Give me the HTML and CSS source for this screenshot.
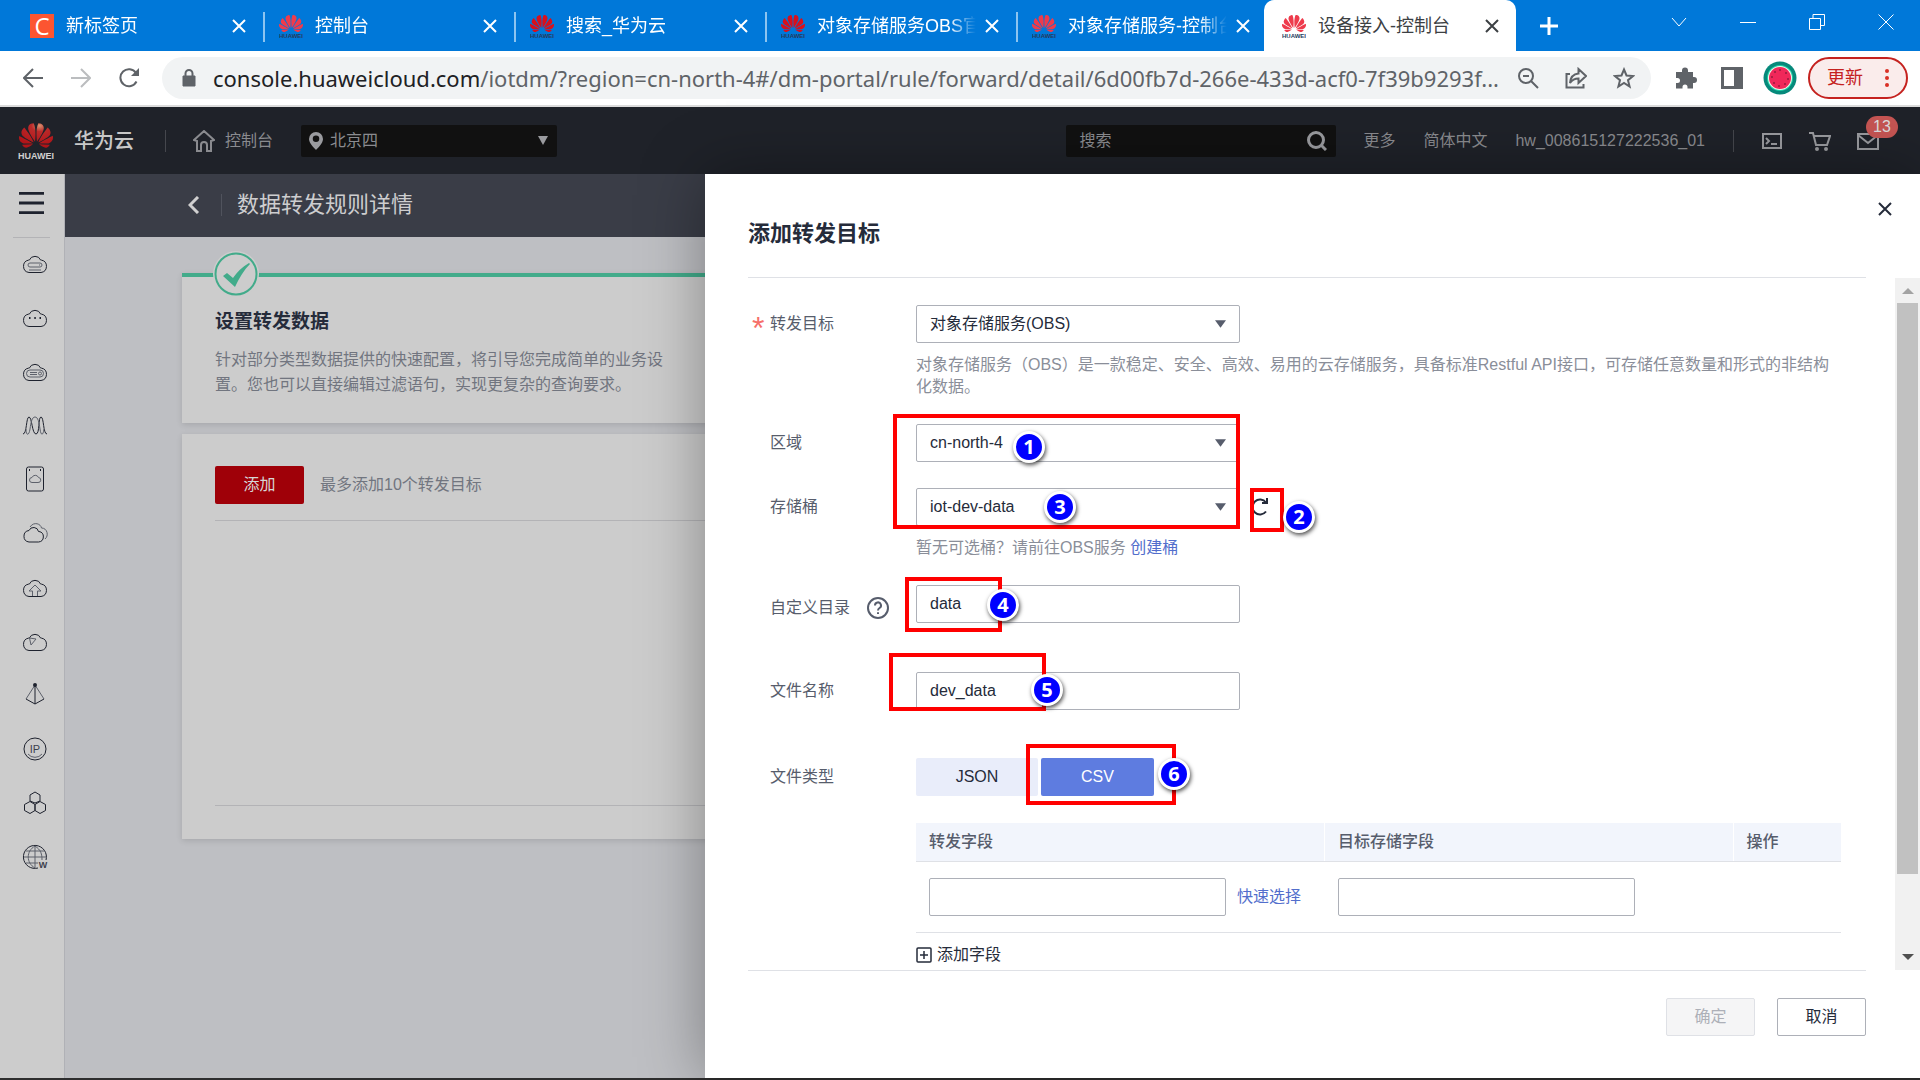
FILE: index.html
```html
<!DOCTYPE html>
<html lang="zh-CN">
<head>
  <meta charset="UTF-8">
  <meta name="viewport" content="width=device-width, initial-scale=1.0">
  <title>设备接入-控制台</title>
  <link rel="stylesheet" href="styles.css">
</head>
<body>
  <!-- shared icon shapes -->
  <svg class="sprite" aria-hidden="true">
    <defs>
      <radialGradient id="petalRed" cx="0.6" cy="0.1" r="0.8">
        <stop offset="0" stop-color="#d9926f"/>
        <stop offset="0.3" stop-color="#bb2a2a"/>
        <stop offset="1" stop-color="#b01418"/>
      </radialGradient>
      <symbol id="petals" viewBox="0 2 24 20" preserveAspectRatio="none">
        <path d="M3.67 6.14S1.82 7.91 1.72 9.78v.35c.08 1.51 1.22 2.4 1.22 2.4 1.83 1.79 6.26 4.04 7.3 4.55 0 0 .06.03.1-.01l.02-.04v-.04C7.52 10.8 3.67 6.14 3.67 6.14zM9.65 18.6c-.02-.08-.1-.08-.1-.08l-7.38.26c.8 1.43 2.15 2.53 3.56 2.2.96-.25 3.16-1.78 3.88-2.3.06-.05.04-.09.04-.09zm.08-.78C6.49 15.63.21 12.28.21 12.28c-.15.46-.2.9-.21 1.3v.07c0 1.07.4 1.82.4 1.82.8 1.69 2.34 2.2 2.34 2.2.7.3 1.4.31 1.4.31.12.02 4.4 0 5.54 0 .05 0 .08-.05.08-.05v-.06c0-.03-.03-.05-.03-.05zM9.06 3.19a3.42 3.42 0 00-2.57 3.15v.41c.03.6.16 1.05.16 1.05.66 2.9 3.86 7.65 4.55 8.65.05.05.1.03.1.03a.1.1 0 00.06-.1c1.06-10.6-1.11-13.42-1.11-13.42-.32.02-1.19.23-1.19.23zm8.3 2.27s-.49-1.8-2.44-2.28c0 0-.57-.14-1.17-.22 0 0-2.18 2.81-1.12 13.43.01.07.06.08.06.08.07.03.1-.03.1-.03.72-1.03 3.9-5.76 4.55-8.64 0 0 .36-1.4.02-2.34zm-2.92 13.07s-.07 0-.09.05c0 0-.01.07.03.1.7.51 2.85 2 3.88 2.3 0 0 .16.05.43.06h.14c.69-.02 1.9-.37 3-2.26l-7.4-.25zm7.83-8.41c.14-2.06-1.94-3.97-1.94-3.98 0 0-3.85 4.66-6.67 10.8 0 0-.03.08.02.13l.04.01h.06c1.06-.53 5.46-2.77 7.28-4.54 0 0 1.15-.93 1.21-2.42zm1.52 2.14s-6.28 3.37-9.52 5.55c0 0-.05.04-.03.11 0 0 .03.06.07.06 1.16 0 5.56 0 5.67-.02 0 0 .57-.02 1.27-.29 0 0 1.56-.5 2.37-2.27 0 0 .73-1.45.17-3.14z"/>
      </symbol>
      <symbol id="favicon" viewBox="0 0 24 24">
        <use href="#petals" width="24" height="19"/>
        <text x="12" y="24" text-anchor="middle" class="favicon-text">HUAWEI</text>
      </symbol>
      <symbol id="cross" viewBox="0 0 14 14">
        <path d="M1 1l12 12M13 1L1 13" fill="none" stroke="currentColor"/>
      </symbol>
      <symbol id="cloud" viewBox="0 0 28 22">
        <path d="M8 20.500H20a6.300 6.300 0 0 0 .5-12.400h-.8a6.200 6.200 0 0 0-11.400 0h-.8A6.300 6.300 0 0 0 8 20.500z"/>
      </symbol>
    </defs>
  </svg>

  <header class="browser">
    <nav class="tab-bar">
      <div class="tab">
        <span class="favicon-c">C</span>
        <span class="tab-title">新标签页</span>
        <button class="tab-close" aria-label="关闭"><svg><use href="#cross"/></svg></button>
      </div>
      <div class="tab">
        <svg class="favicon light"><use href="#favicon"/></svg>
        <span class="tab-title">控制台</span>
        <button class="tab-close" aria-label="关闭"><svg><use href="#cross"/></svg></button>
      </div>
      <div class="tab">
        <svg class="favicon dark"><use href="#favicon"/></svg>
        <span class="tab-title">搜索_华为云</span>
        <button class="tab-close" aria-label="关闭"><svg><use href="#cross"/></svg></button>
      </div>
      <div class="tab">
        <svg class="favicon dark"><use href="#favicon"/></svg>
        <span class="tab-title">对象存储服务OBS官</span>
        <button class="tab-close" aria-label="关闭"><svg><use href="#cross"/></svg></button>
      </div>
      <div class="tab">
        <svg class="favicon light"><use href="#favicon"/></svg>
        <span class="tab-title">对象存储服务-控制台</span>
        <button class="tab-close" aria-label="关闭"><svg><use href="#cross"/></svg></button>
      </div>
      <div class="tab active">
        <svg class="favicon light"><use href="#favicon"/></svg>
        <span class="tab-title">设备接入-控制台</span>
        <button class="tab-close" aria-label="关闭"><svg><use href="#cross"/></svg></button>
      </div>
      <button class="new-tab" aria-label="新标签页"><svg viewBox="0 0 18 18"><path d="M9 0v18M0 9h18"/></svg></button>
      <div class="window-controls">
        <button aria-label="搜索标签页"><svg viewBox="0 0 16 16"><path d="M1 4l7 8 7-8"/></svg></button>
        <button aria-label="最小化"><svg viewBox="0 0 16 16"><path d="M0 8.500h16"/></svg></button>
        <button aria-label="还原"><svg viewBox="0 0 16 16"><path d="M.5 4.500h11v11H.5zM4 4V.5h11.500v11H12"/></svg></button>
        <button aria-label="关闭窗口"><svg viewBox="0 0 16 16"><path d="M.5.5l15 15M15.500.5l-15 15"/></svg></button>
      </div>
    </nav>

    <div class="address-row">
      <button class="nav-btn" aria-label="后退"><svg viewBox="0 0 20 20"><path d="M20 10H2M10 1l-9 9 9 9"/></svg></button>
      <button class="nav-btn faded" aria-label="前进"><svg viewBox="0 0 20 20"><path d="M0 10h18M10 1l9 9-9 9"/></svg></button>
      <button class="nav-btn" aria-label="刷新"><svg viewBox="0 0 20 20"><path d="M17.500 13.500A8.500 8.500 0 1 1 17 5"/><path class="solid" d="M20 0v8h-8z"/></svg></button>
      <div class="omnibox">
        <svg class="lock" viewBox="0 0 14 18"><path d="M1 7h12v10H1z" fill="currentColor" stroke="currentColor" stroke-linejoin="round"/><path d="M3.500 7V4.500a3.500 3.500 0 0 1 7 0V7" fill="none" stroke="currentColor" stroke-width="2"/></svg>
        <span class="url"><b>console.huaweicloud.com</b>/iotdm/?region=cn-north-4#/dm-portal/rule/forward/detail/6d00fb7d-266e-433d-acf0-7f39b9293f...</span>
        <svg class="tool" viewBox="0 0 22 22"><circle cx="9" cy="9" r="7"/><path d="M6 9h6M14 14l7 7"/></svg>
        <svg class="tool thin" viewBox="0 0 22 22"><path d="M5 7H1.500v13.500h17V17M5 16c.5-6 3.500-9 8.500-9.500V2l7.500 7-7.500 7v-4.500C10 11.500 7 13 5 16z"/></svg>
        <svg class="tool" viewBox="0 0 22 22"><path d="M11 2.500l2.500 6 6.500.5-5 4.200 1.600 6.300L11 16l-5.600 3.500L7 13.200 2 9l6.500-.5z"/></svg>
      </div>
      <div class="extensions">
        <svg viewBox="0 0 22 22"><path fill="#5f6368" d="M1 5h6V3.500a3 3 0 0 1 6 0V5h5v5h1a3 3 0 0 1 0 6h-1v5.500h-5.500V20a2.500 2.500 0 0 0-5 0v1.500H1V16h1.500a2.500 2.500 0 0 0 0-5H1z"/></svg>
        <svg viewBox="0 0 22 22"><path fill="#5f6368" fill-rule="evenodd" d="M0 0h22v22H0zM3 3v16h10V3z"/></svg>
        <svg class="avatar" viewBox="0 0 34 34">
          <circle cx="17" cy="17" r="16.500" fill="#06897b"/><circle cx="17" cy="17" r="13" fill="#1fd0a6"/><circle cx="17" cy="17" r="12" fill="#f3f8ee"/><circle cx="17" cy="17" r="11" fill="#f0285a"/>
          <g fill="#3b1020"><circle cx="17" cy="9" r=".7"/><circle cx="23" cy="12" r=".7"/><circle cx="25" cy="18" r=".7"/><circle cx="22" cy="23" r=".7"/><circle cx="16" cy="25" r=".7"/><circle cx="11" cy="22" r=".7"/><circle cx="9" cy="16" r=".7"/><circle cx="12" cy="11" r=".7"/></g>
        </svg>
      </div>
      <button class="update-btn">更新<svg viewBox="0 0 6 20"><circle cx="3" cy="3" r="2"/><circle cx="3" cy="10" r="2"/><circle cx="3" cy="17" r="2"/></svg></button>
    </div>
  </header>

  <header class="console-bar">
    <svg class="logo" viewBox="0 0 36 40">
      <use href="#petals" width="34" height="27" x="1" y="1" fill="url(#petalRed)"/>
      <text x="18" y="38" text-anchor="middle">HUAWEI</text>
    </svg>
    <strong class="brand">华为云</strong>
    <a href="#" class="home">
      <svg viewBox="0 0 22 22"><path d="M1 10L11 1l10 9-3 1v10h-4v-6a3 3 0 0 0-6 0v6H4V11z"/></svg>控制台
    </a>
    <div class="region">
      <svg class="pin" viewBox="0 0 14 18"><path fill-rule="evenodd" d="M7 0a7 7 0 0 1 7 7c0 4-5 9-7 11-2-2-7-7-7-11a7 7 0 0 1 7-7zm0 3.500a3 3 0 1 0 0 6.500 3 3 0 0 0 0-6.500z"/></svg>
      <select aria-label="区域选择"><option>北京四</option></select>
      <svg class="caret" viewBox="0 0 10 9"><path d="M0 0h10L5 9z"/></svg>
    </div>
    <div class="site-search">
      <input type="text" placeholder="搜索" aria-label="搜索">
      <svg viewBox="0 0 20 20"><circle cx="9" cy="9" r="7.500"/><path d="M14 14l5 5"/></svg>
    </div>
    <a href="#" class="top-link">更多</a>
    <a href="#" class="top-link">简体中文</a>
    <a href="#" class="top-link">hw_008615127222536_01</a>
    <div class="top-icons">
      <svg viewBox="0 0 22 22"><path d="M2 4h18v14H2zM5 8l3 3-3 3M10 14h6"/></svg>
      <svg viewBox="0 0 22 22"><path d="M0 3h4l3 12h11l3-9H5"/><circle cx="8" cy="19" r="1"/><circle cx="17" cy="19" r="1"/></svg>
      <span class="mail">
        <svg viewBox="0 0 22 22"><path d="M1 4h20v15H1zM1 5l10 8 10-8"/></svg>
        <span class="mail-count">13</span>
      </span>
    </div>
  </header>

  <div class="workspace">
    <aside class="sidebar">
      <button class="menu-btn" aria-label="菜单"><svg viewBox="0 0 26 24"><path d="M0 2h26M0 12h26M0 22h26"/></svg></button>
      <nav class="services">
        <a href="#" aria-label="服务"><svg viewBox="0 0 28 28"><use href="#cloud" y="3" width="28" height="22"/><path class="fine" d="M9 14h10a2 2 0 0 1 0 4H9a2 2 0 0 1 0-4zM8 21h12M18 16h1"/></svg></a>
        <a href="#" aria-label="服务"><svg viewBox="0 0 28 28"><use href="#cloud" y="3" width="28" height="22"/><path class="dots" d="M8 15h1.500M13.300 15h1.500M18.500 15H20"/></svg></a>
        <a href="#" aria-label="服务"><svg viewBox="0 0 28 28"><use href="#cloud" y="3" width="28" height="22"/><path class="fine" d="M9 13h10a3.500 3.500 0 0 1 0 7H9a3.500 3.500 0 0 1 0-7zM9 15.500h7M9 17.500h7"/><circle class="fine" cx="19" cy="16.500" r="1.500"/></svg></a>
        <a href="#" aria-label="服务"><svg viewBox="0 0 28 28"><path d="M2 23c4 0 3-17 6-17s3 17 7 17 2-17 5-17 2 17 6 17"/><path class="fine" d="M5 18c0 7 3 7 4 0s2-12 5-12 4 5 5 12 3 7 4 0"/></svg></a>
        <a href="#" aria-label="服务"><svg viewBox="0 0 28 28"><rect x="5.500" y="2" width="17" height="24" rx="2"/><path class="dots" d="M8 5h1M19 5h1"/><path class="fine" d="M11 17.500h6a2.500 2.500 0 0 0 .5-5 3.500 3.500 0 0 0-6.500 0 2.500 2.500 0 0 0 0 5z"/></svg></a>
        <a href="#" aria-label="服务"><svg viewBox="0 0 28 28"><path class="fine" d="M9 8c4-6 11-3 11.500 1 6 0 7.500 8 3.500 11"/><path d="M8 23h9.500a5.300 5.300 0 0 0 .5-10.500h-.5a5 5 0 0 0-9.500-1 5.800 5.800 0 0 0 0 11.500z"/></svg></a>
        <a href="#" aria-label="服务"><svg viewBox="0 0 28 28"><use href="#cloud" y="3" width="28" height="22"/><path class="fine" d="M11.500 23v-5H8l6-6 6 6h-3.500v5"/></svg></a>
        <a href="#" aria-label="服务"><svg viewBox="0 0 28 28"><use href="#cloud" y="3" width="28" height="22"/><path class="fine" d="M8.500 11l6.500 1-5 6z"/></svg></a>
        <a href="#" aria-label="服务"><svg viewBox="0 0 28 28"><path class="fine" d="M14 4L5 18M14 4l9 14"/><path d="M14 4v19M5 18l9 5 9-5"/><circle cx="14" cy="4" r="1" class="dots"/></svg></a>
        <a href="#" aria-label="服务"><svg viewBox="0 0 28 28"><circle cx="14" cy="14" r="11"/><path class="fine" d="M7 19a9 9 0 0 0 14 0"/><text x="14" y="18" text-anchor="middle">IP</text></svg></a>
        <a href="#" aria-label="服务"><svg viewBox="0 0 28 28"><path d="M14 3l5 3v6l-5 2-5-2V6zM9 12.500l5 3v6l-5 3-5.500-3v-6zM19 12.500l5.500 3v6l-5.500 3-5-3v-6z"/></svg></a>
        <a href="#" aria-label="服务"><svg viewBox="0 0 28 28"><path d="M25 17a11.500 11.500 0 1 0-8 8"/><path class="fine" d="M14 3v22M3 14h22M5 8h18M5 20h12M14 3c-9 5-9 17 0 22M14 3c6 4 7 8 7 14"/><text class="bold" x="22" y="25" text-anchor="middle">W</text></svg></a>
      </nav>
    </aside>

    <main class="page">
      <div class="page-head">
        <button class="back-btn" aria-label="返回"><svg viewBox="0 0 12 18"><path d="M10 1L2 9l8 8"/></svg></button>
        <h1>数据转发规则详情</h1>
      </div>
      <section class="card step-card">
        <svg class="step-check" viewBox="0 0 46 46"><circle class="halo" cx="23" cy="23" r="23"/><circle class="ring" cx="23" cy="23" r="20.500"/><path d="M10 25l4-3 6 5c4-6 9-11 16-15l1 1c-6 6-11 14-15 23z"/></svg>
        <h2>设置转发数据</h2>
        <p>针对部分类型数据提供的快速配置，将引导您完成简单的业务设<br>置。您也可以直接编辑过滤语句，实现更复杂的查询要求。</p>
      </section>
      <section class="card targets-card">
        <div class="targets-head">
          <button class="add-btn">添加</button>
          <span>最多添加10个转发目标</span>
        </div>
        <div class="targets-list"></div>
      </section>
    </main>

    <aside class="drawer">
      <div class="drawer-head">
        <h2>添加转发目标</h2>
        <button class="drawer-close" aria-label="关闭"><svg><use href="#cross"/></svg></button>
      </div>

      <div class="drawer-body">
        <form class="form">
          <div class="field">
            <label class="field-label required" for="target">转发目标</label>
            <div class="field-control">
              <div class="select-box">
                <select id="target"><option>对象存储服务(OBS)</option></select>
                <svg viewBox="0 0 10 7"><path d="M0 0h10L5 7z"/></svg>
              </div>
              <p class="hint">对象存储服务（OBS）是一款稳定、安全、高效、易用的云存储服务，具备标准Restful API接口，可存储任意数量和形式的非结构<br>化数据。</p>
            </div>
          </div>

          <div class="field">
            <label class="field-label" for="region">区域</label>
            <div class="field-control">
              <div class="select-box">
                <select id="region"><option>cn-north-4</option></select>
                <svg viewBox="0 0 10 7"><path d="M0 0h10L5 7z"/></svg>
              </div>
            </div>
          </div>

          <div class="field">
            <label class="field-label" for="bucket">存储桶</label>
            <div class="field-control">
              <div class="control-line">
                <div class="select-box">
                  <select id="bucket"><option>iot-dev-data</option></select>
                  <svg viewBox="0 0 10 7"><path d="M0 0h10L5 7z"/></svg>
                </div>
                <button type="button" class="refresh-btn" aria-label="刷新"><svg viewBox="0 0 20 20"><path d="M16 14.500a7.500 7.500 0 1 1 0-9M17 1v5h-5"/></svg></button>
              </div>
              <p class="hint">暂无可选桶？请前往OBS服务 <a href="#">创建桶</a></p>
            </div>
          </div>

          <div class="field">
            <label class="field-label with-help" for="folder">自定义目录
              <svg viewBox="0 0 24 24"><circle cx="12" cy="12" r="10"/><path d="M9 9.500a3 3 0 1 1 4.500 2.500c-1 .6-1.500 1-1.500 2.500M12 16.200V18"/></svg>
            </label>
            <div class="field-control"><input class="text-box" id="folder" type="text" value="data"></div>
          </div>

          <div class="field name-field">
            <label class="field-label" for="filename">文件名称</label>
            <div class="field-control"><input class="text-box" id="filename" type="text" value="dev_data"></div>
          </div>

          <div class="field">
            <span class="field-label">文件类型</span>
            <div class="field-control">
              <div class="segment">
                <button type="button">JSON</button>
                <button type="button" class="selected">CSV</button>
              </div>
              <table class="mapping">
                <thead>
                  <tr><th>转发字段</th><th>目标存储字段</th><th>操作</th></tr>
                </thead>
                <tbody>
                  <tr>
                    <td><div class="cell"><input class="text-box" type="text" aria-label="转发字段"><a href="#">快速选择</a></div></td>
                    <td><input class="text-box" type="text" aria-label="目标存储字段"></td>
                    <td></td>
                  </tr>
                </tbody>
              </table>
              <button type="button" class="add-field"><svg viewBox="0 0 16 16"><rect x="1" y="1" width="14" height="14" rx="1"/><path d="M4 8h8M8 4v8"/></svg>添加字段</button>
            </div>
          </div>

          <!-- numbered step marks over the form -->
          <div class="mark mark-source"></div>
          <div class="mark mark-refresh"></div>
          <div class="mark mark-folder"></div>
          <div class="mark mark-filename"></div>
          <div class="mark mark-type"></div>
          <span class="num num-1">1</span>
          <span class="num num-2">2</span>
          <span class="num num-3">3</span>
          <span class="num num-4">4</span>
          <span class="num num-5">5</span>
          <span class="num num-6">6</span>
        </form>
        <div class="scrollbar">
          <svg viewBox="0 0 12 6"><path d="M0 6h12L6 0z" fill="#a3a3a3"/></svg>
          <div class="track"><div class="thumb"></div></div>
          <svg viewBox="0 0 12 6"><path d="M0 0h12L6 6z" fill="#505050"/></svg>
        </div>
      </div>

      <div class="drawer-foot">
        <button class="foot-btn" disabled>确定</button>
        <button class="foot-btn">取消</button>
      </div>
    </aside>
  </div>
  <footer class="taskbar-edge"></footer>
</body>
</html>
```
FILE: styles.css
```css
* {
  margin: 0;
  padding: 0;
  box-sizing: border-box;
}

body {
  height: 100vh;
  display: flex;
  flex-direction: column;
  overflow: hidden;
  font: 16px/22px "Liberation Sans", "Noto Sans CJK SC", sans-serif;
  color: #252b3a;
}

button, input, select {
  font: inherit;
  color: inherit;
  background: none;
  border: none;
  border-radius: 0;
}

button {
  cursor: pointer;
}

a {
  color: #526ecc;
  text-decoration: none;
}

svg {
  display: block;
  flex: none;
}

.sprite {
  position: absolute;
  width: 0;
  height: 0;
}

/* Browser tabs */
.tab-bar {
  display: flex;
  height: 51px;
  background: #0078d9;
  color: #fff;
}

.tab {
  flex: 0 1 251px;
  min-width: 0;
  display: flex;
  align-items: center;
  padding: 1px 0 0 30px;
  font-size: 18px;
}

.tab + .tab {
  padding-left: 28px;
}

.tab + .tab:not(.active) {
  background: linear-gradient(#8cc4f0, #8cc4f0) 12px 12px / 2px 30px no-repeat;
}

.favicon, .favicon-c {
  flex: none;
  width: 24px;
  height: 24px;
}

.favicon-c {
  background: #fc5531;
  font: 24px/24px "Open Sans", sans-serif;
  text-align: center;
}

.favicon.light {
  fill: #ee3b4c;
}

.favicon.dark {
  fill: #d8101c;
}

.favicon-text {
  font: bold 6px "Liberation Sans", sans-serif;
  fill: #263a5c;
}

.tab-title {
  flex: 1;
  margin-left: 12px;
  overflow: hidden;
  white-space: nowrap;
  -webkit-mask-image: linear-gradient(90deg, #000 78%, transparent 94%);
  mask-image: linear-gradient(90deg, #000 78%, transparent 94%);
}

.tab-close {
  width: 24px;
  height: 28px;
  margin-left: -6px;
  display: grid;
  place-items: center;
}

.tab-close svg {
  width: 14px;
  height: 14px;
  stroke-width: 2;
}

.tab.active {
  flex-basis: 252px;
  margin-left: 9px;
  padding-left: 18px;
  padding-right: 12px;
  background: #fff;
  border-radius: 10px 10px 0 0;
  color: #3c4043;
}

.tab.active .tab-title {
  -webkit-mask-image: none;
  mask-image: none;
}

.new-tab {
  width: 66px;
  display: grid;
  place-items: center;
}

.new-tab svg {
  width: 18px;
  stroke: #fff;
  stroke-width: 3;
}

.window-controls {
  display: flex;
  margin-left: auto;
}

.window-controls button {
  width: 69px;
  height: 43px;
  display: grid;
  place-items: center;
}

.window-controls svg {
  width: 16px;
  height: 16px;
  fill: none;
  stroke: #fff;
}

/* Address row */
.address-row {
  display: flex;
  align-items: center;
  height: 56px;
  padding: 0 12px 0 9px;
  background: #fff;
  border-bottom: 2px solid #dcdcdc;
}

.nav-btn {
  width: 48px;
  height: 48px;
  display: grid;
  place-items: center;
}

.nav-btn svg {
  width: 20px;
  height: 20px;
  fill: none;
  stroke: #5f6368;
  stroke-width: 2;
}

.nav-btn .solid {
  fill: #5f6368;
  stroke: none;
}

.nav-btn.faded svg {
  stroke: #bbbdbf;
}

.omnibox {
  flex: 1;
  min-width: 0;
  display: flex;
  align-items: center;
  gap: 26px;
  height: 42px;
  margin-left: 9px;
  padding: 0 16px 0 20px;
  background: #f1f3f4;
  border-radius: 21px;
  color: #5f6368;
}

.lock {
  width: 14px;
  height: 20px;
}

.url {
  flex: 1;
  min-width: 0;
  margin: 0 -16px 0 -9px;
  overflow: hidden;
  white-space: nowrap;
  font: 22px/34px "Noto Sans", "Open Sans", sans-serif;
}

.url b {
  font-weight: 400;
  color: #202124;
}

.tool {
  width: 22px;
  height: 22px;
  fill: none;
  stroke: #5f6368;
  stroke-width: 2;
}

.extensions {
  display: flex;
  align-items: center;
  gap: 24px;
  margin: 0 11px 0 24px;
}

.extensions svg {
  width: 22px;
  height: 22px;
}

.extensions .avatar {
  width: 34px;
  height: 34px;
  margin-left: -4px;
}

.update-btn {
  display: flex;
  align-items: center;
  justify-content: space-between;
  width: 100px;
  height: 42px;
  padding: 0 16px 0 17px;
  border: 2px solid #c5221f;
  border-radius: 21px;
  background: #faeceb;
  color: #c5221f;
  font-size: 18px;
}

.update-btn svg {
  width: 6px;
  height: 20px;
  fill: #d93025;
}

/* Console bar */
.console-bar {
  display: flex;
  align-items: center;
  height: 67px;
  padding: 0 41px 0 18px;
  background: #1f2229;
  color: #8a8b8f;
}

.console-bar a {
  color: inherit;
}

.logo {
  width: 36px;
  height: 40px;
}

.logo text {
  font: bold 9px "Liberation Sans", sans-serif;
  fill: #d0d0d0;
}

.brand {
  margin-left: 20px;
  font-size: 20px;
  font-weight: 500;
  color: #c8c8c8;
}

.home {
  display: flex;
  align-items: center;
  gap: 10px;
  margin-left: 31px;
  padding-left: 27px;
  border-left: 1px solid #45474d;
}

.home svg {
  width: 22px;
  height: 22px;
  fill: none;
  stroke: #8a8b8f;
  stroke-width: 2;
}

.region, .site-search {
  position: relative;
  display: flex;
  align-items: center;
  height: 32px;
  background: #111;
  border-radius: 2px;
}

.region {
  width: 256px;
  margin-left: 28px;
}

.region select {
  appearance: none;
  width: 100%;
  height: 32px;
  padding-left: 29px;
}

.region svg {
  position: absolute;
  fill: #9a9b9f;
}

.pin {
  left: 8px;
  width: 14px;
  height: 18px;
}

.caret {
  right: 9px;
  width: 10px;
  height: 9px;
}

.site-search {
  width: 270px;
  margin-left: auto;
  margin-right: 27px;
  padding-right: 9px;
}

.site-search input {
  flex: 1;
  min-width: 0;
  height: 32px;
  padding-left: 13px;
}

.site-search input::placeholder {
  color: #8a8b8f;
}

.site-search svg {
  width: 20px;
  height: 20px;
  fill: none;
  stroke: #9a9b9f;
  stroke-width: 3;
}

.top-link {
  margin-right: 28px;
  white-space: nowrap;
}

.top-icons {
  display: flex;
  gap: 26px;
  padding-left: 27px;
  border-left: 1px solid #45474d;
}

.top-icons svg {
  width: 22px;
  height: 22px;
  fill: none;
  stroke: #9a9b9f;
  stroke-width: 2;
}

.mail {
  position: relative;
}

.mail-count {
  position: absolute;
  top: -14px;
  left: 9px;
  width: 32px;
  border-radius: 11px;
  background: #c65553;
  color: #dcdcdc;
  text-align: center;
}

/* Workspace */
.workspace {
  position: relative;
  flex: 1;
  min-height: 0;
  display: grid;
  grid-template-columns: 65px 1fr;
}

.sidebar {
  background: #ccc;
  border-right: 1px solid #b0b1b6;
}

.menu-btn {
  display: block;
  margin: 0 13px;
  padding: 17px 6px 22px;
  border-bottom: 1px solid #b3b3b6;
}

.menu-btn svg {
  width: 25px;
  height: 24px;
  stroke: #1e222e;
  stroke-width: 3;
}

.services a {
  display: grid;
  place-items: center;
  height: 54px;
  padding: 0 0 4px 6px;
}

.services svg {
  width: 28px;
  height: 28px;
  fill: none;
  stroke: #1e222e;
}

.services .fine {
  stroke: #5d616b;
}

.services .dots {
  stroke-width: 2;
}

.services text {
  font: 11px "Liberation Sans", sans-serif;
  fill: #3d414c;
  stroke: none;
}

.services .bold {
  font-size: 9px;
  font-weight: bold;
}

.page {
  min-width: 0;
  background: #bebfc3;
}

.page-head {
  display: flex;
  align-items: center;
  height: 63px;
  padding: 0 0 2px 123px;
  background: #3a3d47;
  color: #cdcdcf;
}

.back-btn svg {
  width: 12px;
  height: 18px;
  fill: none;
  stroke: #d0d0d0;
  stroke-width: 3;
}

.page-head h1 {
  margin-left: 21px;
  padding-left: 15px;
  border-left: 1px solid #50535d;
  font-size: 22px;
  font-weight: 400;
}

.card {
  margin-left: 117px;
  padding: 0 33px;
  background: #ccc;
  box-shadow: 0 2px 6px rgba(0, 0, 0, 0.12);
}

.step-card {
  position: relative;
  height: 150px;
  margin-top: 36px;
  padding-top: 33px;
  border-top: 4px solid #42ab8a;
}

.step-check {
  position: absolute;
  top: -26px;
  left: 31px;
  width: 46px;
  height: 46px;
  fill: #42ab8a;
}

.step-check .halo {
  fill: #ccc;
}

.step-check .ring {
  fill: none;
  stroke: #42ab8a;
  stroke-width: 2;
}

.step-card h2 {
  font-size: 19px;
  line-height: 24px;
}

.step-card p {
  margin-top: 13px;
  line-height: 25px;
  color: #71757f;
}

.targets-card {
  margin-top: 11px;
  padding-bottom: 33px;
}

.targets-head {
  display: flex;
  align-items: center;
  gap: 16px;
  padding: 32px 0 16px;
  color: #71757f;
}

.add-btn {
  width: 89px;
  height: 38px;
  border-radius: 2px;
  background: #9f0008;
  color: #d6d6d6;
}

.targets-list {
  height: 286px;
  border: solid #b3b3b6;
  border-width: 1px 0;
}

/* Drawer */
.drawer {
  position: absolute;
  top: 0;
  right: 0;
  bottom: 0;
  left: 705px;
  display: flex;
  flex-direction: column;
  background: #fff;
  box-shadow: 0 0 60px rgba(0, 0, 0, 0.35);
}

.drawer-head {
  display: flex;
  justify-content: space-between;
  height: 104px;
  margin: 0 54px 0 43px;
  padding-top: 46px;
  border-bottom: 1px solid #dfe1e6;
}

.drawer-head h2 {
  font-size: 22px;
  line-height: 28px;
}

.drawer-close {
  position: absolute;
  top: 21px;
  right: 21px;
  width: 28px;
  height: 28px;
  display: grid;
  place-items: center;
}

.drawer-close svg {
  width: 14px;
  height: 14px;
  stroke-width: 2;
}

.drawer-body {
  flex: 1;
  min-height: 0;
  display: flex;
  overflow: hidden;
  padding-left: 43px;
}

.form {
  position: relative;
  flex: 1;
  min-width: 0;
  padding: 27px 54px 0 0;
}

.field {
  display: grid;
  grid-template-columns: 168px 1fr;
  margin-bottom: 26px;
}

.name-field {
  margin: 41px 0 48px;
}

.field-label {
  position: relative;
  padding-left: 22px;
  line-height: 38px;
  color: #575d6c;
}

.field-label.required::before {
  content: "*";
  position: absolute;
  left: 4px;
  top: 4px;
  color: #f66f6a;
  font-size: 32px;
}

.field-label.with-help {
  display: flex;
  align-items: center;
  height: 46px;
  gap: 16px;
}

.with-help svg {
  width: 24px;
  height: 24px;
  fill: none;
  stroke: #575d6c;
  stroke-width: 2;
}

.control-line {
  display: flex;
  align-items: center;
  gap: 10px;
}

.select-box {
  position: relative;
  width: 324px;
}

.select-box select, .text-box {
  display: block;
  appearance: none;
  width: 324px;
  height: 38px;
  padding: 0 13px;
  border: 1px solid #adb0b8;
  border-radius: 2px;
  background: #fff;
}

.select-box svg {
  position: absolute;
  top: 15px;
  right: 14px;
  width: 11px;
  height: 8px;
  fill: #575d6c;
}

.refresh-btn svg {
  width: 20px;
  height: 20px;
  fill: none;
  stroke: #252b3a;
  stroke-width: 2;
}

.hint {
  margin-top: 11px;
  color: #8a8e99;
  white-space: nowrap;
}

.segment {
  display: flex;
  gap: 3px;
}

.segment button {
  width: 122px;
  height: 38px;
  border-radius: 2px;
  background: #e9edfa;
}

.segment .selected {
  width: 113px;
  background: #5e7ce0;
  color: #fff;
}

.mapping {
  width: 100%;
  margin-top: 27px;
  table-layout: fixed;
  border-collapse: collapse;
}

.mapping th {
  height: 38px;
  padding: 0 13px;
  border-left: 1px solid #fff;
  border-bottom: 1px solid #dfe1e6;
  background: #f2f5fc;
  color: #575d6c;
  font-weight: 500;
  text-align: left;
}

.mapping th:first-child {
  border-left: none;
}

.mapping th:last-child {
  width: 108px;
}

.mapping td {
  height: 71px;
  padding: 0 13px;
  border-bottom: 1px solid #dfe1e6;
}

.mapping .text-box {
  width: 297px;
}

.cell {
  display: flex;
  align-items: center;
  gap: 11px;
  white-space: nowrap;
}

.add-field {
  display: flex;
  align-items: center;
  gap: 5px;
  height: 44px;
}

.add-field svg {
  width: 16px;
  height: 16px;
  fill: none;
  stroke: #252b3a;
  stroke-width: 1.5;
}

/* Step marks */
.mark {
  position: absolute;
  border: 4px solid #f00;
}

.mark-source {
  top: 136px;
  left: 145px;
  width: 347px;
  height: 115px;
}

.mark-refresh {
  top: 210px;
  left: 502px;
  width: 34px;
  height: 44px;
}

.mark-folder {
  top: 299px;
  left: 157px;
  width: 97px;
  height: 55px;
}

.mark-filename {
  top: 375px;
  left: 141px;
  width: 157px;
  height: 58px;
}

.mark-type {
  top: 466px;
  left: 278px;
  width: 150px;
  height: 61px;
}

.num {
  position: absolute;
  width: 32px;
  height: 32px;
  border: 3px solid #fff;
  border-radius: 50%;
  background: #00f;
  box-shadow: 1px 2px 4px rgba(0, 0, 0, 0.7);
  color: #fff;
  font: bold 20px/26px "Open Sans", "Noto Sans", sans-serif;
  text-align: center;
}

.num-1 {
  top: 153px;
  left: 265px;
}

.num-2 {
  top: 223px;
  left: 535px;
}

.num-3 {
  top: 213px;
  left: 296px;
}

.num-4 {
  top: 311px;
  left: 239px;
}

.num-5 {
  top: 396px;
  left: 283px;
}

.num-6 {
  top: 480px;
  left: 410px;
}

.scrollbar {
  display: flex;
  flex-direction: column;
  align-items: center;
  width: 25px;
  padding: 10px 2px;
  background: #f1f1f1;
}

.scrollbar svg {
  width: 12px;
  height: 6px;
}

.track {
  flex: 1;
  width: 100%;
  padding: 9px 0;
}

.thumb {
  height: 89%;
  background: #c1c1c1;
}

.drawer-foot {
  display: flex;
  justify-content: flex-end;
  gap: 22px;
  height: 108px;
  margin: 0 54px 0 43px;
  padding-top: 27px;
  border-top: 1px solid #dfe1e6;
}

.foot-btn {
  width: 89px;
  height: 38px;
  border: 1px solid #adb0b8;
  border-radius: 2px;
}

.foot-btn:disabled {
  border-color: #dfe1e6;
  background: #f5f5f6;
  color: #adb0b8;
}

.taskbar-edge {
  height: 2px;
  background: #2e2e2e;
}
```
